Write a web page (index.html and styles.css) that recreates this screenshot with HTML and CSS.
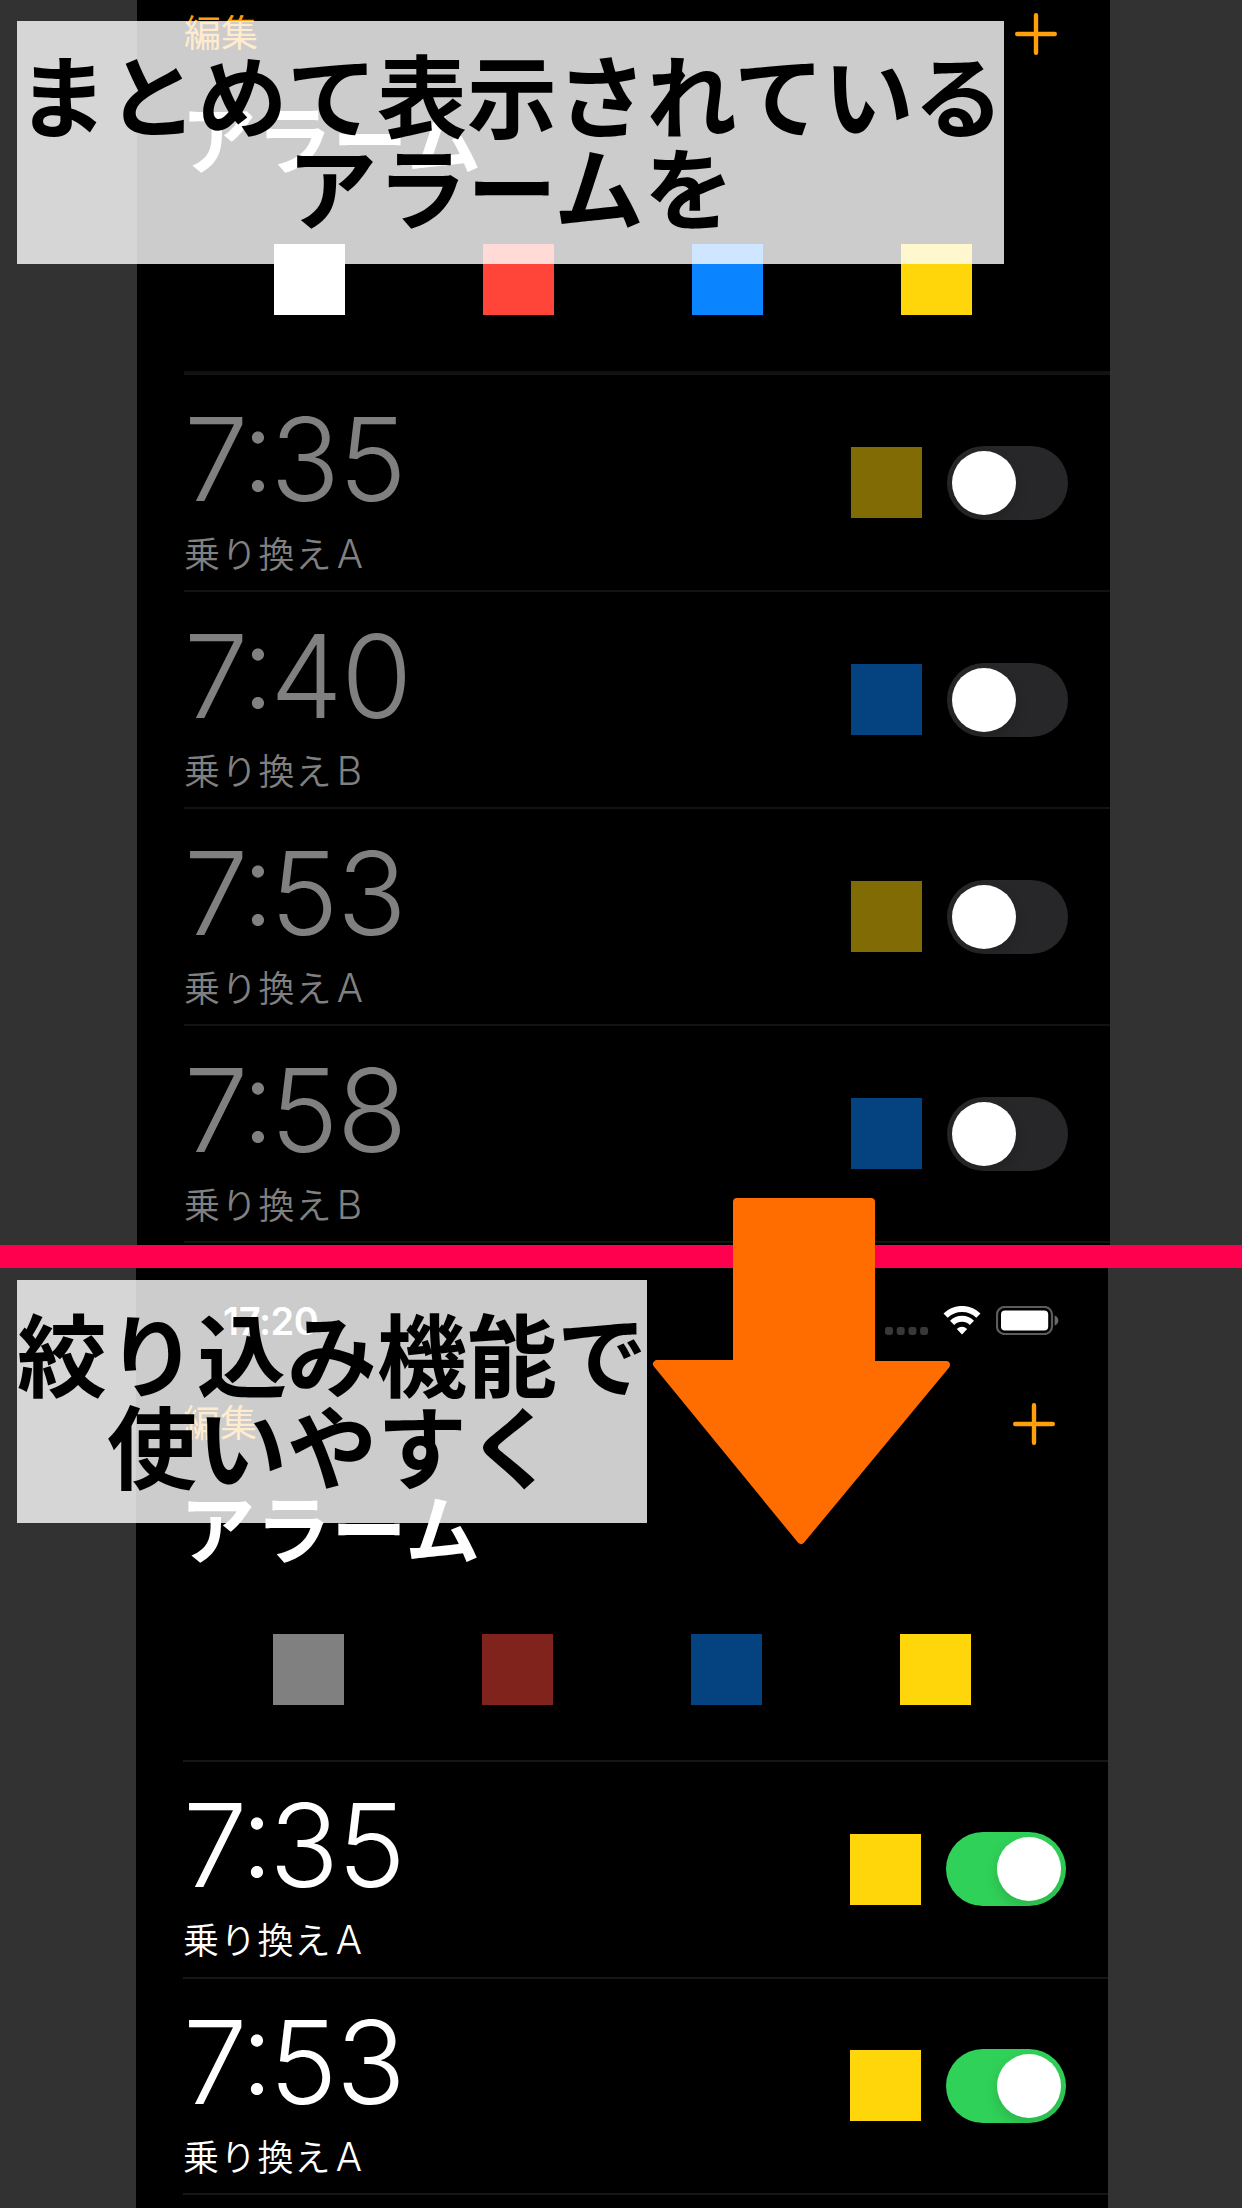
FILE: index.html
```html
<!DOCTYPE html>
<html lang="ja">
<head>
<meta charset="utf-8">
<title>アラーム</title>
<link rel="stylesheet" href="styles.css">
</head>
<body>
<main class="poster">
  <section class="scene scene-all">
    <div class="phone">
      <header class="nav">
        <span class="edit">編集</span>
        <svg class="plus" viewBox="0 0 42 42"><path d="M21 2.2v37.6M2.2 21h37.6"/></svg>
      </header>
      <h1 class="title">アラーム</h1>
      <div class="filters">
        <i class="swatch white"></i><i class="swatch red"></i><i class="swatch blue"></i><i class="swatch yellow"></i>
      </div>
      <ul class="alarms">
        <li class="alarm">
          <div class="info"><span class="time">7<span class="colon">:</span>35</span><span class="label">乗り換え<b>A</b></span></div>
          <i class="swatch yellow dim"></i><span class="switch"><i class="knob"></i></span>
        </li>
        <li class="alarm">
          <div class="info"><span class="time">7<span class="colon">:</span>40</span><span class="label">乗り換え<b>B</b></span></div>
          <i class="swatch blue dim"></i><span class="switch"><i class="knob"></i></span>
        </li>
        <li class="alarm">
          <div class="info"><span class="time">7<span class="colon">:</span>53</span><span class="label">乗り換え<b>A</b></span></div>
          <i class="swatch yellow dim"></i><span class="switch"><i class="knob"></i></span>
        </li>
        <li class="alarm">
          <div class="info"><span class="time">7<span class="colon">:</span>58</span><span class="label">乗り換え<b>B</b></span></div>
          <i class="swatch blue dim"></i><span class="switch"><i class="knob"></i></span>
        </li>
        <li class="alarm"></li>
      </ul>
    </div>
    <p class="caption">まとめて表示されている<br>アラームを</p>
  </section>
  <div class="divider"></div>
  <section class="scene scene-filtered">
    <div class="phone">
      <div class="status">
        <span class="clock">17:20</span>
        <svg class="signal" viewBox="0 0 44 8"><rect width="8" height="8" rx="2.4"/><rect x="11.7" width="8" height="8" rx="2.4"/><rect x="23.4" width="8" height="8" rx="2.4"/><rect x="35.1" width="8" height="8" rx="2.4"/></svg>
        <svg class="wifi" viewBox="0 0 38 29">
          <path class="arc" d="M2.6 9.6A23.5 23.5 0 0 1 35.4 9.6"/>
          <path class="arc" d="M9.1 16.8A14.2 14.2 0 0 1 28.9 16.8"/>
          <path d="M19 28.6l-5.2-5.6q5.2-4.6 10.4 0z"/>
        </svg>
        <svg class="battery" viewBox="0 0 63 29">
          <rect class="case" x="1" y="1" width="55" height="27" rx="7.5"/>
          <rect x="5" y="4.6" width="47.2" height="20" rx="4"/>
          <path class="cap" d="M58.6 9.6q3.7 1.4 3.7 5t-3.7 5z"/>
        </svg>
      </div>
      <header class="nav">
        <span class="edit">編集</span>
        <svg class="plus" viewBox="0 0 42 42"><path d="M21 2.2v37.6M2.2 21h37.6"/></svg>
      </header>
      <h1 class="title">アラーム</h1>
      <div class="filters">
        <i class="swatch white dim"></i><i class="swatch red dim"></i><i class="swatch blue dim"></i><i class="swatch yellow"></i>
      </div>
      <ul class="alarms">
        <li class="alarm on">
          <div class="info"><span class="time">7<span class="colon">:</span>35</span><span class="label">乗り換え<b>A</b></span></div>
          <i class="swatch yellow"></i><span class="switch"><i class="knob"></i></span>
        </li>
        <li class="alarm on">
          <div class="info"><span class="time">7<span class="colon">:</span>53</span><span class="label">乗り換え<b>A</b></span></div>
          <i class="swatch yellow"></i><span class="switch"><i class="knob"></i></span>
        </li>
        <li class="alarm on"></li>
      </ul>
    </div>
    <p class="caption">絞り込み機能で<br>使いやすく</p>
  </section>
  <svg class="arrow" viewBox="0 0 300 348"><path d="M85 4H219V167H294L149 342L5 166H85Z"/></svg>
</main>
</body>
</html>
```
FILE: styles.css
```css
* { box-sizing: border-box; margin: 0; padding: 0; }

body {
  background: #323232;
  font-family: Inter, "Noto Sans CJK JP", sans-serif;
}

.poster {
  position: relative;
  display: flex;
  flex-direction: column;
  width: 1242px;
  height: 2208px;
  overflow: hidden;
}

.scene { position: relative; overflow: hidden; }
.scene-all { height: 1245px; padding-left: 137px; }
.scene-filtered { height: 940px; padding-left: 136px; }
.divider { height: 23px; background: #ff004f; }

.phone {
  display: flex;
  flex-direction: column;
  width: 973px;
  height: 100%;
  background: #000;
}
.scene-filtered .phone { width: 972px; }

/* status bar */
.status {
  display: flex;
  flex: none;
  align-items: flex-end;
  height: 122px;
  padding: 0 49px 55px 87px;
}
.clock {
  margin-right: auto;
  color: #fff;
  font-size: 38px;
  font-weight: 600;
  line-height: 27px;
  letter-spacing: -.4px;
}
.status svg { fill: #fff; }
.signal { width: 44px; height: 8px; margin-right: 14px; }
.status .signal { fill: #383838; }
.wifi { width: 38px; height: 29px; margin-right: 15px; }
.arc { fill: none; stroke: #fff; stroke-width: 6; }
.battery { width: 63px; height: 29px; }
.battery .case { fill: none; stroke: #5c5c5c; stroke-width: 2.2; }
.battery .cap { fill: #6a6a6a; }

/* navigation */
.nav {
  display: flex;
  flex: none;
  align-items: center;
  justify-content: space-between;
  height: 68px;
  padding: 0 53px 0 47px;
}
.edit {
  color: #ff9f0a;
  font-size: 37px;
  line-height: 44px;
}
.plus {
  width: 42px;
  height: 42px;
  fill: none;
  stroke: #ff9f0a;
  stroke-width: 4.4;
  stroke-linecap: round;
}
.title {
  flex: none;
  height: 144px;
  padding: 1px 0 0 44px;
  color: #fff;
  font-size: 75px;
  font-weight: 700;
  line-height: 144px;
  letter-spacing: .8px;
}

/* colour filters */
.filters {
  display: flex;
  flex: none;
  gap: 138px;
  height: 159px;
  padding: 32px 0 0 137px;
}
.scene-filtered .filters { height: 158px; }
.swatch { flex: none; width: 71px; height: 71px; }
.white { background: #fff; }
.red { background: #ff453a; }
.blue { background: #0a84ff; }
.yellow { background: #ffd60a; }
.dim { opacity: .5; }

/* alarm list */
.alarms {
  margin-left: 47px;
  list-style: none;
  border-top: 2px solid #111;
}
.alarm {
  display: flex;
  align-items: center;
  height: 217px;
  padding-right: 42px;
  border-top: 2px solid #131313;
  color: #808080;
}
.alarm.on { height: 216.5px; color: #fff; border-top-color: #161616; }
.scene-filtered .alarms { border-top: 0; }
.info {
  display: flex;
  flex: 1;
  flex-direction: column;
  padding-top: 21px;
}
.time {
  font-size: 115px;
  font-weight: 330;
  line-height: 100px;
  letter-spacing: -1.5px;
}
.colon {
  margin-left: -5px;
  line-height: 0;
  letter-spacing: -4px;
  vertical-align: 10px;
}
.label {
  margin-top: 22px;
  font-size: 36px;
  font-weight: 350;
  line-height: 44px;
  letter-spacing: 1.2px;
}
.label b { margin-left: 4px; font-size: 39px; font-weight: 330; }
.switch {
  display: flex;
  width: 121px;
  height: 74px;
  margin-left: 25px;
  padding: 5px;
  border-radius: 37px;
  background: #272729;
}
.knob {
  width: 64px;
  height: 64px;
  border-radius: 50%;
  background: #fff;
  box-shadow: 0 6px 14px rgba(0, 0, 0, .14);
}
.on .switch { justify-content: flex-end; width: 120px; background: #30d158; }

/* captions over the screens */
.caption {
  position: absolute;
  top: 21px;
  left: 17px;
  width: 987px;
  height: 243px;
  padding-top: 25px;
  background: rgba(255, 255, 255, .8);
  color: #000;
  font-family: "Noto Sans CJK JP", sans-serif;
  font-size: 90px;
  font-weight: 700;
  line-height: 92px;
  letter-spacing: -.1px;
  text-align: center;
  white-space: nowrap;
}
.scene-filtered .caption { top: 12px; width: 630px; letter-spacing: 0; }

.arrow {
  position: absolute;
  top: 1198px;
  left: 652px;
  width: 300px;
  height: 348px;
  fill: #ff6c00;
  stroke: #ff6c00;
  stroke-width: 8;
  stroke-linejoin: round;
}
```
